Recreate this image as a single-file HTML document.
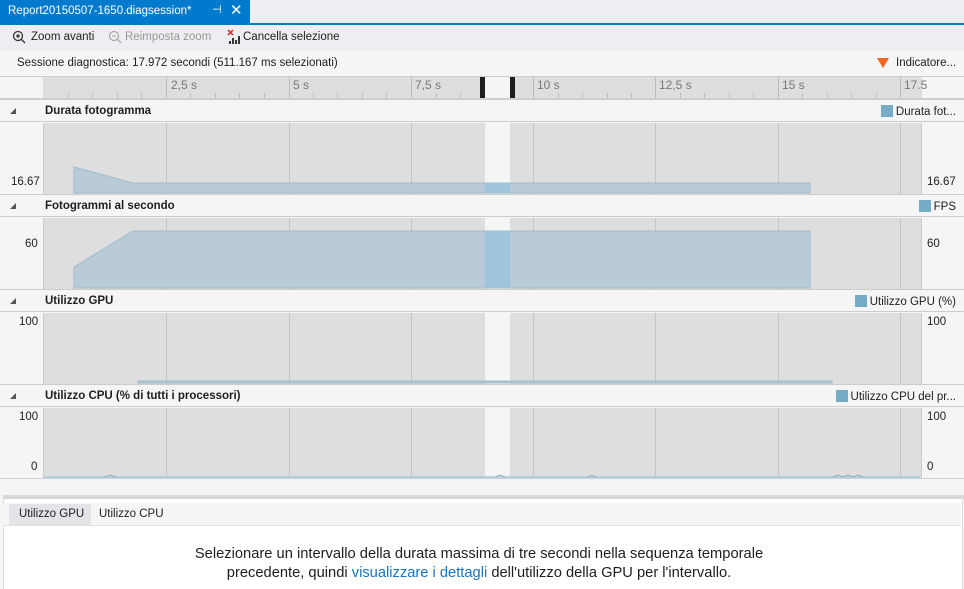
<html><head><style>
body{margin:0;width:964px;height:589px;position:relative;background:#f5f5f5;font-family:"Segoe UI","Liberation Sans",sans-serif;font-size:11.5px;color:#1e1e1e;overflow:hidden}
.a{position:absolute}
.hdr{position:absolute;left:0;width:964px;height:23px;background:#f5f5f5;border-top:1px solid #ccc;border-bottom:1px solid #ccc;box-sizing:border-box}
.hdr b{position:absolute;left:45px;top:5px;font-weight:600;font-size:11.5px}
.hdr i{position:absolute;left:10px;top:8px;width:0;height:0;border-left:6px solid transparent;border-bottom:6px solid #555}
.leg{position:absolute;top:5px;right:8px;font-size:11.5px}
.leg s{display:inline-block;width:12px;height:12px;background:#76abc6;vertical-align:-2px;margin-right:3px;text-decoration:none}
.lab{position:absolute;font-size:11.5px}
</style></head><body>
<div class="a" style="left:0;top:0;width:964px;height:23px;background:#eeeef2"></div>
<div class="a" style="left:0;top:0;width:250px;height:23px;background:#007acc;color:#fff;font-size:11.5px"><span class="a" style="left:8px;top:5px">Report20150507-1650.diagsession*</span><span class="a" style="left:212px;top:3px;font-size:11px">⊣</span><span class="a" style="left:230px;top:1px;font-size:15px">✕</span></div>
<div class="a" style="left:0;top:23px;width:964px;height:2px;background:#007acc"></div>
<div class="a" style="left:0;top:25px;width:964px;height:26px;background:#eeeef2"></div>
<svg class="a" style="left:12px;top:30px" width="16" height="16"><circle cx="6" cy="6" r="4.5" fill="none" stroke="#333" stroke-width="1.3"/><path d="M9 9l4 4M4 6h4M6 4v4" stroke="#333" stroke-width="1.3"/></svg>
<span class="a" style="left:31px;top:31px">Zoom avanti</span>
<svg class="a" style="left:108px;top:30px" width="16" height="16"><circle cx="6" cy="6" r="4.5" fill="none" stroke="#aaa" stroke-width="1.3"/><path d="M9 9l4 4M4 6h4" stroke="#aaa" stroke-width="1.3"/></svg>
<span class="a" style="left:125px;top:31px;color:#999">Reimposta zoom</span>
<svg class="a" style="left:227px;top:29px" width="16" height="17"><path d="M1 1l5 5M6 1l-5 5" stroke="#d22" stroke-width="1.5"/><path d="M3 15v-3M6 15v-6M9 15v-4M12 15v-8" stroke="#333" stroke-width="2"/></svg>
<span class="a" style="left:243px;top:31px">Cancella selezione</span>
<span class="a" style="left:17px;top:57px">Sessione diagnostica: 17.972 secondi (511.167 ms selezionati)</span>
<div class="a" style="left:877px;top:58px;width:0;height:0;border-left:6px solid transparent;border-right:6px solid transparent;border-top:10px solid #f26522"></div>
<span class="a" style="left:896px;top:57px">Indicatore...</span>
<div class="a" style="left:0;top:76px;width:964px;height:23px;border-top:1px solid #ccd;border-bottom:1px solid #ccd;box-sizing:border-box;background:#f5f5f5"></div>
<svg class="a" style="left:0;top:77px" width="964" height="21">
<rect x="43" y="0" width="879" height="21" fill="#dedede"/>
<rect x="485" y="0" width="26" height="21" fill="#f5f5f5"/>
<rect x="480" y="0" width="5" height="21" fill="#1e1e1e"/><rect x="510" y="0" width="5" height="21" fill="#1e1e1e"/>
<g stroke="#bbb"><path d="M166.5 0v21M289.5 0v21M411.5 0v21M533.5 0v21M655.5 0v21M778.5 0v21M900.5 0v21"/>
<path d="M68.5 16v5M92.5 16v5M117.5 16v5M141.5 16v5M190.5 16v5M215.5 16v5M239.5 16v5M264.5 16v5M313.5 16v5M337.5 16v5M362.5 16v5M386.5 16v5M436.5 16v5M460.5 16v5M558.5 16v5M582.5 16v5M607.5 16v5M631.5 16v5M680.5 16v5M704.5 16v5M729.5 16v5M753.5 16v5M802.5 16v5M827.5 16v5M851.5 16v5M876.5 16v5"/></g>
<g fill="#777" font-size="12" font-family="Segoe UI,Liberation Sans,sans-serif"><text x="171" y="12">2,5 s</text><text x="293" y="12">5 s</text><text x="415" y="12">7,5 s</text><text x="537" y="12">10 s</text><text x="659" y="12">12,5 s</text><text x="782" y="12">15 s</text><text x="904" y="12">17.5</text></g>
</svg>
<div class="hdr" style="top:99px"><i></i><b>Durata fotogramma</b><span class="leg"><s></s>Durata fot...</span></div>
<div class="hdr" style="top:194px"><i></i><b>Fotogrammi al secondo</b><span class="leg"><s></s>FPS</span></div>
<div class="hdr" style="top:289px"><i></i><b>Utilizzo GPU</b><span class="leg"><s></s>Utilizzo GPU (%)</span></div>
<div class="hdr" style="top:384px"><i></i><b>Utilizzo CPU (% di tutti i processori)</b><span class="leg"><s></s>Utilizzo CPU del pr...</span></div>
<svg class="a" style="left:0;top:122px" width="964" height="357">
<defs><g id="bg"><rect x="43" y="0" width="879" height="71" fill="#dedede"/><rect x="485" y="0" width="25" height="71" fill="#f5f5f5"/><path d="M166.5 0v71M289.5 0v71M411.5 0v71M533.5 0v71M655.5 0v71M778.5 0v71M900.5 0v71" stroke="#c4c4c8"/><path d="M43.5 0v71M921.5 0v71" stroke="#ccc"/></g></defs>
<use href="#bg" y="1"/><use href="#bg" y="96"/><use href="#bg" y="191"/><use href="#bg" y="286"/>
<path d="M74 45L133 61H810V71H74Z" fill="#b8cbd6" stroke="#9fbccc"/>
<path d="M74 145L133 109L810 109V166H74Z" fill="#b8cbd6" stroke="#9fbccc"/>
<path d="M138 259H832V261H138Z" fill="#a9c7d8" stroke="#9fbccc"/>
<path d="M44 355H920" stroke="#a9c7d8" stroke-width="1.5"/>
<path d="M104 355l6-2 6 2M495 355l5-2 5 2M588 355l4-2 4 2M833 355l5-2 5 2 5-2 5 2 5-2 5 2" stroke="#8fb4c8" fill="none"/>
<rect x="485" y="61" width="25" height="10" fill="#9fc4dc"/><rect x="485" y="109" width="25" height="57" fill="#9fc4dc"/>
</svg>
<span class="lab" style="left:11px;top:176px">16.67</span><span class="lab" style="left:927px;top:176px">16.67</span>
<span class="lab" style="left:25px;top:238px">60</span><span class="lab" style="left:927px;top:238px">60</span>
<span class="lab" style="left:19px;top:316px">100</span><span class="lab" style="left:927px;top:316px">100</span>
<span class="lab" style="left:19px;top:411px">100</span><span class="lab" style="left:927px;top:411px">100</span>
<span class="lab" style="left:31px;top:461px">0</span><span class="lab" style="left:927px;top:461px">0</span>
<div class="a" style="left:0;top:478px;width:964px;height:1px;background:#ccd"></div>
<div class="a" style="left:3px;top:495px;width:961px;height:4px;background:#d8d8dc"></div>
<div class="a" style="left:3px;top:499px;width:958px;height:90px;background:#fff;border-left:1px solid #ddd;border-right:1px solid #ddd"></div>
<div class="a" style="left:3px;top:503px;width:958px;height:22px;background:#f5f5f5;border-bottom:1px solid #e0e0e0"></div>
<div class="a" style="left:9px;top:504px;width:82px;height:21px;background:#e4e4e8"></div>
<span class="a" style="left:19px;top:508px">Utilizzo GPU</span>
<span class="a" style="left:99px;top:508px">Utilizzo CPU</span>
<div class="a" style="left:0;top:545px;width:958px;text-align:center;font-size:14.7px;line-height:19px;color:#1e1e1e">Selezionare un intervallo della durata massima di tre secondi nella sequenza temporale<br>precedente, quindi <span style="color:#1a73c0">visualizzare i dettagli</span> dell'utilizzo della GPU per l'intervallo.</div>
</body></html>
